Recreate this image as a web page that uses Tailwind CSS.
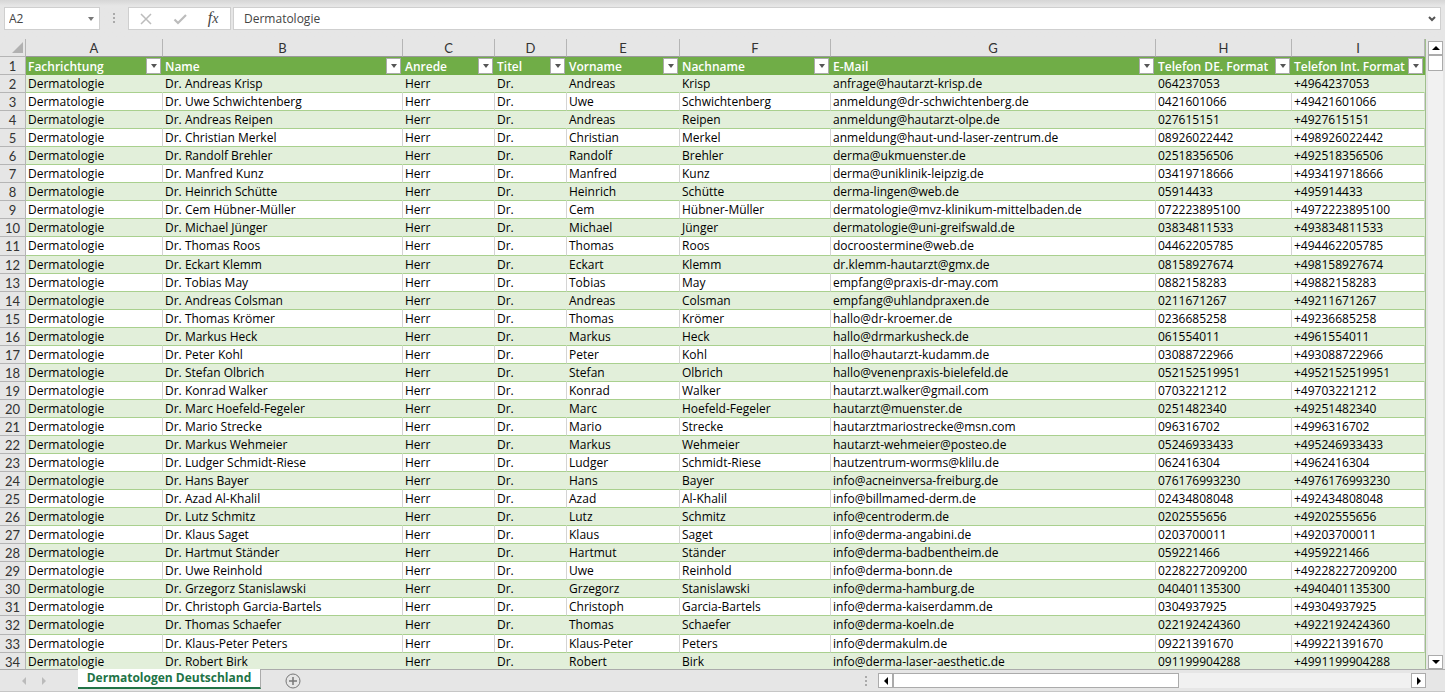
<!DOCTYPE html>
<html lang="de">
<head>
<meta charset="utf-8">
<title>Dermatologen Deutschland</title>
<script src="https://cdn.jsdelivr.net/npm/@tailwindcss/browser@4"></script>
</head>
<body class="flex h-screen flex-col overflow-hidden bg-[#e6e6e6] font-['Open_Sans',sans-serif] text-[12px] text-black">

<header class="flex h-[39px] shrink-0 items-start bg-linear-to-b from-[#d6d6d6] to-[#e6e6e6] to-15% pt-[7px] pr-1 pl-1">
  <div class="flex h-[23px] w-24 items-center border border-[#cfcfcf] bg-white pr-1">
    <input aria-label="Namenfeld" value="A2" class="h-full w-full min-w-0 pl-1 text-[#444] outline-none">
    <button aria-label="Namen anzeigen" class="shrink-0"><svg class="h-2 w-2" viewBox="0 0 8 8"><path d="M1 2h6L4 6z" fill="#777"/></svg></button>
  </div>
  <svg class="h-[23px] w-7 shrink-0" viewBox="0 0 28 23" fill="#aaa"><path d="M13 6h2v2h-2zM13 10h2v2h-2zM13 14h2v2h-2z"/></svg>
  <div class="flex h-[23px] w-[103px] shrink-0 items-center border border-[#cfcfcf] bg-white">
    <button aria-label="Abbrechen" class="flex flex-1 justify-center"><svg class="h-4 w-4" viewBox="0 0 16 16" fill="none" stroke="#bcbcbc" stroke-width="1.5"><path d="M3 3l10 10M13 3L3 13"/></svg></button>
    <button aria-label="Eingeben" class="flex flex-1 justify-center"><svg class="h-4 w-4" viewBox="0 0 16 16" fill="none" stroke="#bcbcbc" stroke-width="2.2"><path d="M2.500 8.500l3.500 3.500L14 4"/></svg></button>
    <button aria-label="Funktion einfügen" class="flex-1 text-center font-['Liberation_Serif',serif] text-[16px] leading-4 text-[#444] italic">f<span class="text-[14px]">x</span></button>
  </div>
  <div class="ml-[2px] flex h-[23px] flex-1 items-center border border-[#cfcfcf] bg-white pr-1">
    <input aria-label="Bearbeitungsleiste" value="Dermatologie" class="h-full w-full min-w-0 pl-[10px] text-[#444] outline-none">
    <button aria-label="Bearbeitungsleiste erweitern"><svg class="h-2 w-2" viewBox="0 0 8 8" fill="none" stroke="#555" stroke-width="2"><path d="M1 2l3 3 3-3"/></svg></button>
  </div>
</header>

<main class="flex min-h-0 flex-1">
  <div class="min-w-0 flex-1 overflow-hidden border-r border-[#9fbf8c]">
    <table class="h-[632px] w-full table-fixed border-separate border-spacing-0 leading-[14px]">
      <colgroup>
        <col class="w-[26px]"><col class="w-[137px]"><col class="w-[240px]"><col class="w-[92px]"><col class="w-[72px]"><col class="w-[113px]"><col class="w-[151px]"><col><col class="w-[136px]"><col class="w-[133px]">
      </colgroup>
      <thead id="head"></thead>
      <tbody id="rows"></tbody>
    </table>
  </div>
  <div class="flex w-[19px] shrink-0 flex-col pt-[2px] pr-[2px] pl-[2px]">
    <button aria-label="Nach oben" class="flex h-[14px] items-center justify-center border border-[#ababab] bg-white"><svg class="h-2 w-2" viewBox="0 0 8 8"><path d="M0 6h8L4 2z"/></svg></button>
    <div class="flex-1 bg-[#f1f1f1]"><div class="h-4 border border-[#ababab] bg-white"></div></div>
    <button aria-label="Nach unten" class="flex h-[14px] items-center justify-center border border-[#ababab] bg-white"><svg class="h-2 w-2" viewBox="0 0 8 8"><path d="M0 2h8L4 6z"/></svg></button>
  </div>
</main>

<footer class="flex h-[23px] shrink-0 items-start border-b border-[#c6c6c6]">
  <div class="flex h-full w-[78px] items-center gap-3 border-t border-[#ababab] pl-5">
    <button aria-label="Vorheriges Blatt"><svg class="h-2 w-2" viewBox="0 0 8 8"><path d="M6 0v8L2 4z" fill="#bbb"/></svg></button>
    <button aria-label="Nächstes Blatt"><svg class="h-2 w-2" viewBox="0 0 8 8"><path d="M2 0v8l4-4z" fill="#bbb"/></svg></button>
  </div>
  <button class="h-5 w-[183px] border-r border-b-2 border-[#ababab] border-b-[#217346] bg-white text-center leading-4 font-bold text-[#217346]">Dermatologen Deutschland</button>
  <div class="flex h-full flex-1 items-center border-t border-[#ababab] pr-[19px] pl-6">
    <button aria-label="Neues Blatt"><svg class="h-4 w-4" viewBox="0 0 16 16" fill="none" stroke="#777"><circle cx="8" cy="8" r="7"/><path d="M8 4v8M4 8h8" stroke-width="1.500"/></svg></button>
    <svg class="ml-auto h-4 w-6 shrink-0" viewBox="0 0 24 16" fill="#aaa"><path d="M11 3h2v2h-2zM11 7h2v2h-2zM11 11h2v2h-2z"/></svg>
    <div class="flex h-[15px] w-[548px]">
      <button aria-label="Nach links" class="flex w-[15px] items-center justify-center border border-[#ababab] bg-white"><svg class="h-2 w-2" viewBox="0 0 8 8"><path d="M6 0v8L2 4z"/></svg></button>
      <div class="flex-1 bg-[#f1f1f1]"><div class="h-full w-[286px] border border-[#ababab] bg-white"></div></div>
      <button aria-label="Nach rechts" class="flex w-[15px] items-center justify-center border border-[#ababab] bg-white"><svg class="h-2 w-2" viewBox="0 0 8 8"><path d="M2 0v8l4-4z"/></svg></button>
    </div>
  </div>
</footer>

<script>
const data = `Andreas|Krisp|anfrage@hautarzt-krisp.de|064237053
Uwe|Schwichtenberg|anmeldung@dr-schwichtenberg.de|0421601066
Andreas|Reipen|anmeldung@hautarzt-olpe.de|027615151
Christian|Merkel|anmeldung@haut-und-laser-zentrum.de|08926022442
Randolf|Brehler|derma@ukmuenster.de|02518356506
Manfred|Kunz|derma@uniklinik-leipzig.de|03419718666
Heinrich|Schütte|derma-lingen@web.de|05914433
Cem|Hübner-Müller|dermatologie@mvz-klinikum-mittelbaden.de|072223895100
Michael|Jünger|dermatologie@uni-greifswald.de|03834811533
Thomas|Roos|docroostermine@web.de|04462205785
Eckart|Klemm|dr.klemm-hautarzt@gmx.de|08158927674
Tobias|May|empfang@praxis-dr-may.com|0882158283
Andreas|Colsman|empfang@uhlandpraxen.de|0211671267
Thomas|Krömer|hallo@dr-kroemer.de|0236685258
Markus|Heck|hallo@drmarkusheck.de|061554011
Peter|Kohl|hallo@hautarzt-kudamm.de|03088722966
Stefan|Olbrich|hallo@venenpraxis-bielefeld.de|052152519951
Konrad|Walker|hautarzt.walker@gmail.com|0703221212
Marc|Hoefeld-Fegeler|hautarzt@muenster.de|0251482340
Mario|Strecke|hautarztmariostrecke@msn.com|096316702
Markus|Wehmeier|hautarzt-wehmeier@posteo.de|05246933433
Ludger|Schmidt-Riese|hautzentrum-worms@klilu.de|062416304
Hans|Bayer|info@acneinversa-freiburg.de|076176993230
Azad|Al-Khalil|info@billmamed-derm.de|02434808048
Lutz|Schmitz|info@centroderm.de|0202555656
Klaus|Saget|info@derma-angabini.de|0203700011
Hartmut|Ständer|info@derma-badbentheim.de|059221466
Uwe|Reinhold|info@derma-bonn.de|0228227209200
Grzegorz|Stanislawski|info@derma-hamburg.de|040401135300
Christoph|Garcia-Bartels|info@derma-kaiserdamm.de|0304937925
Thomas|Schaefer|info@derma-koeln.de|022192424360
Klaus-Peter|Peters|info@dermakulm.de|09221391670
Robert|Birk|info@derma-laser-aesthetic.de|091199904288`.split("\n").map(l => l.split("|"));
const titles = ["Fachrichtung", "Name", "Anrede", "Titel", "Vorname", "Nachname", "E-Mail", "Telefon DE. Format", "Telefon Int. Format"];
const rowHead = n => `<th scope="row" class="h-[18px] border-r border-b border-[#b5b5b5] p-0 pt-px text-center font-['Lato',sans-serif] text-[13px] font-normal text-[#333]">${n}</th>`;
document.getElementById("head").innerHTML =
  `<tr><th class="h-[18px] border-r border-b border-[#b5b5b5] p-0"><svg class="ml-auto h-[14px] w-[14px]" viewBox="0 0 14 14"><path d="M12 1v11H1z" fill="#b1b1b1"/></svg></th>` +
  [..."ABCDEFGHI"].map(c => `<th scope="col" class="h-[18px] border-r border-b border-[#b5b5b5] border-b-[#999] p-0 text-center font-['Lato',sans-serif] text-[13px] font-normal text-[#333]">${c}</th>`).join("") + `</tr>`;
document.getElementById("rows").innerHTML =
  `<tr>${rowHead(1)}` + titles.map(t => `<th class="h-[18px] bg-[#70ad47] p-0 pl-[2px] text-left font-semibold text-white"><div class="flex h-[18px] items-center justify-between pr-[2px]"><span class="pt-px whitespace-nowrap">${t}</span><button aria-label="${t} filtern" class="flex h-4 w-[15px] shrink-0 items-center justify-center border border-[#ababab] bg-white"><svg class="h-[6px] w-[6px]" viewBox="0 0 6 6"><path d="M0 1h6L3 5z" fill="#555"/></svg></button></div></th>`).join("") + `</tr>` +
  data.map(([v, n, mail, tel], i) => {
    const tone = i % 2 ? "bg-white border-r-[#d4d4d4]" : "bg-[#e2efda] border-r-[#e2efda]";
    return `<tr>${rowHead(i + 2)}` + ["Dermatologie", `Dr. ${v} ${n}`, "Herr", "Dr.", v, n, mail, tel, "+49" + tel.slice(1)]
      .map(t => `<td class="h-[18px] border-r border-b border-b-[#a9d08e] p-0 pt-px pl-[2px] whitespace-nowrap ${tone}">${t}</td>`).join("") + `</tr>`;
  }).join("");
</script>
</body>
</html>
